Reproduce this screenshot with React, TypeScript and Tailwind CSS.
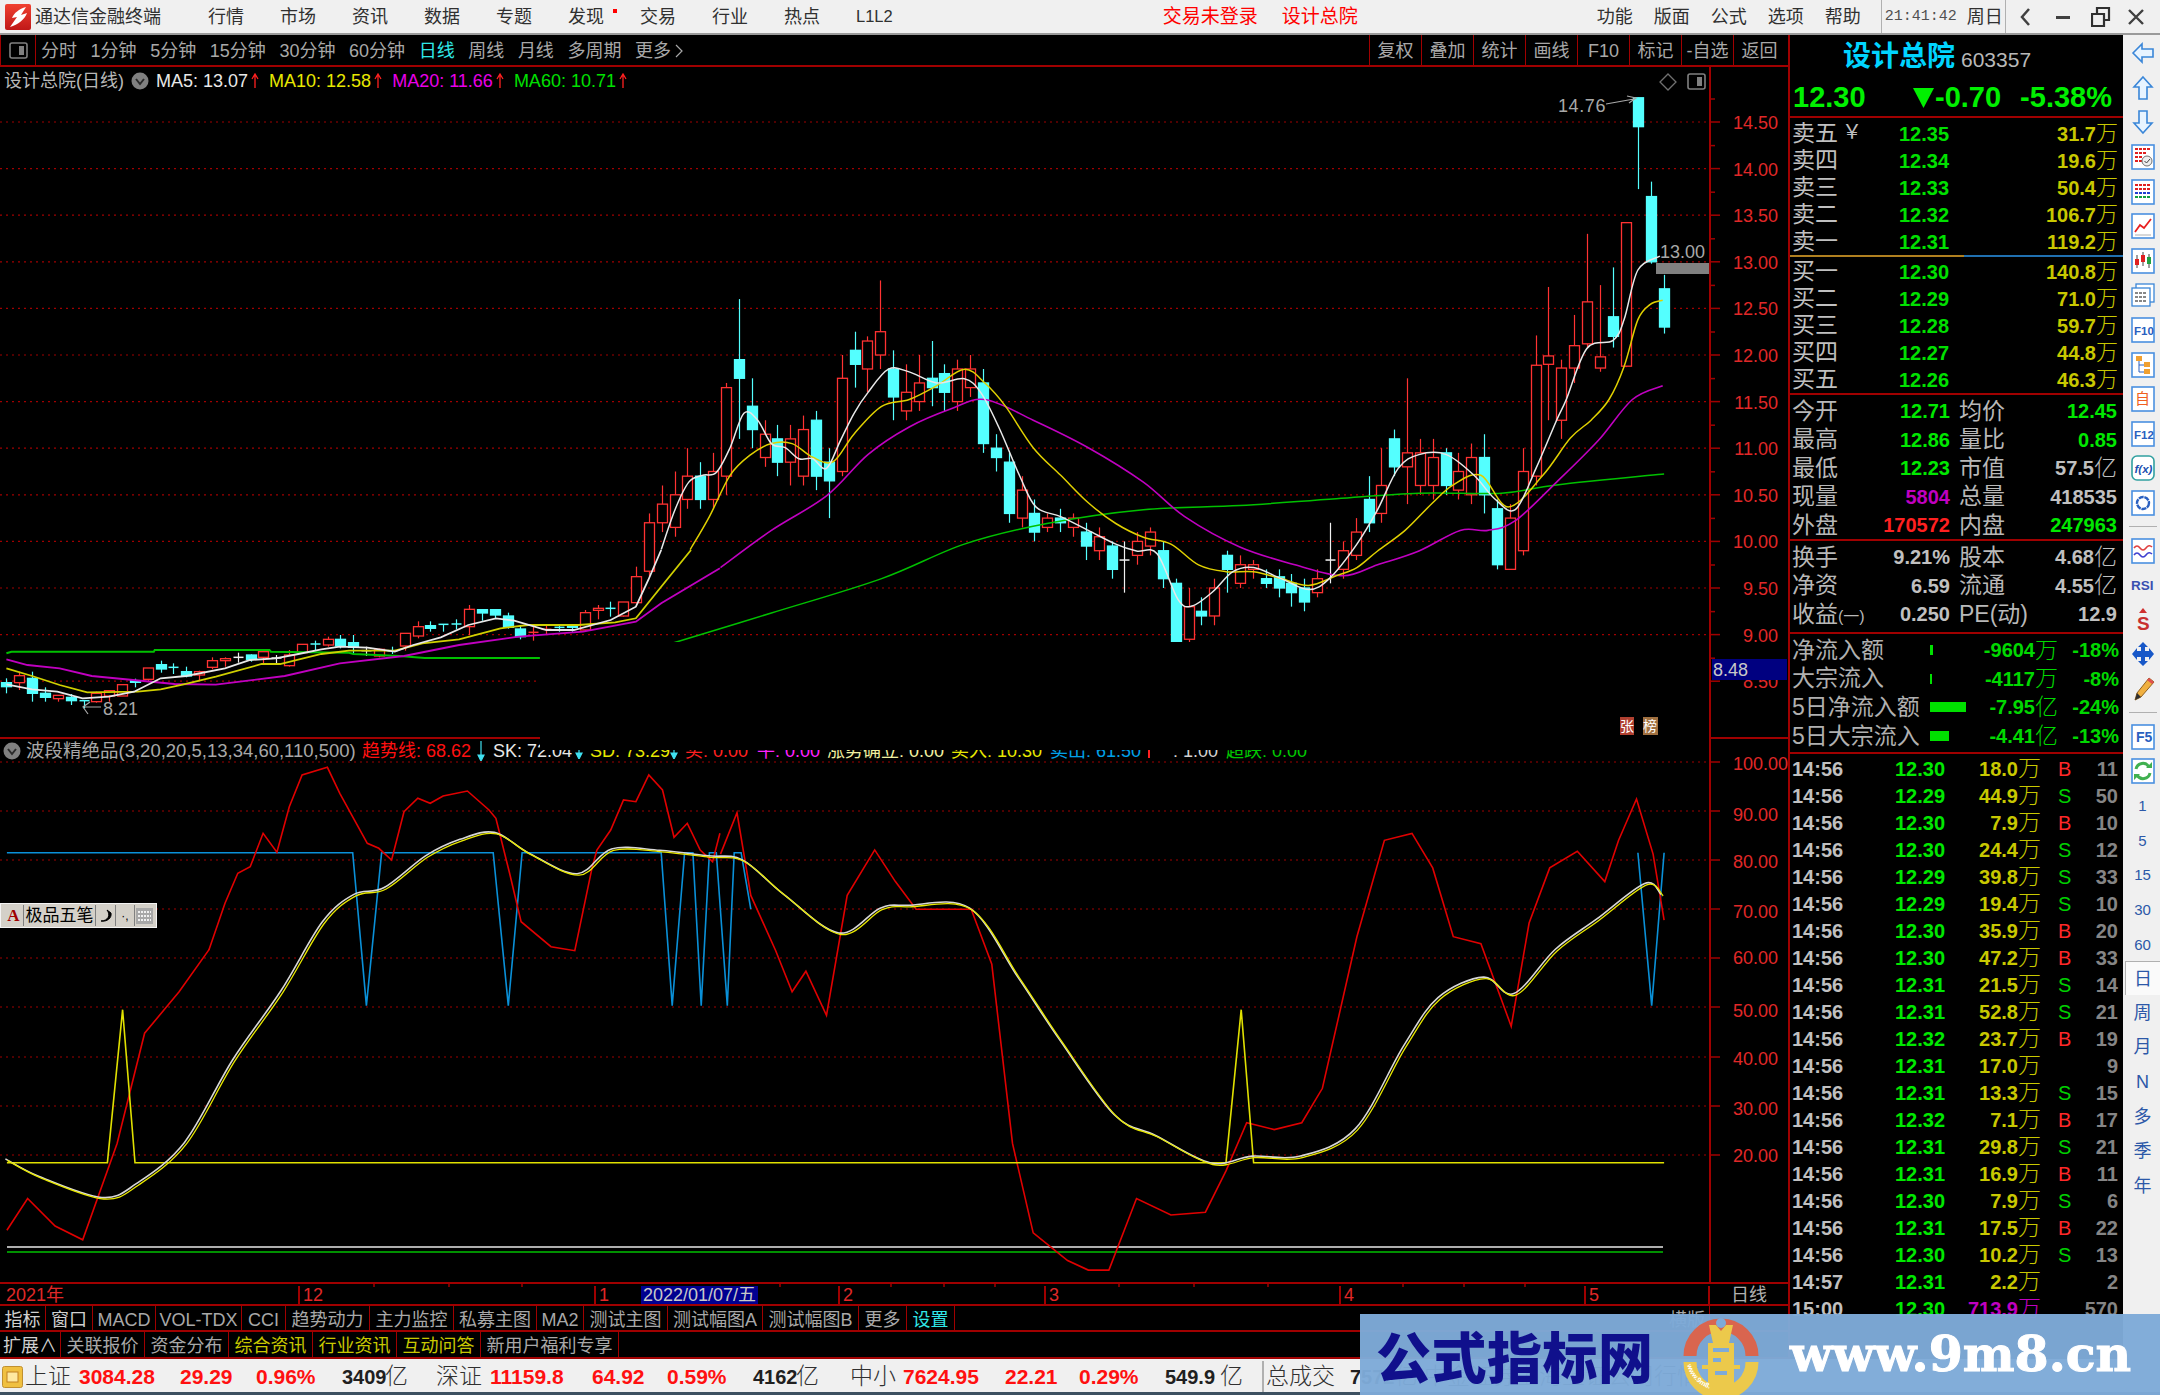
import React from "react";

type P = [number, number];
const SC = 2160 / 1568;
const sh = (a: P[]) => a.map(([x, y]) => `${(x * SC).toFixed(1)},${(y * SC).toFixed(1)}`).join(" ");
const z11 = (a: P[]) => a.map(([x, y]) => `${(x / 2.178).toFixed(1)},${(550 + y / 3).toFixed(1)}`).join(" ");
const z8 = (a: P[]) => a.map(([x, y]) => `${(x / 2.178).toFixed(1)},${(730 + y / 3).toFixed(1)}`).join(" ");
const smooth = (a: P[]) => {
  const p = a.map(([x, y]) => [x * SC, y * SC]);
  let d = `M${p[0][0].toFixed(1)} ${p[0][1].toFixed(1)}`;
  for (let i = 0; i < p.length - 1; i++) {
    const p0 = p[Math.max(0, i - 1)], p1 = p[i], p2 = p[i + 1], p3 = p[Math.min(p.length - 1, i + 2)];
    const c1x = p1[0] + (p2[0] - p0[0]) / 6, c1y = p1[1] + (p2[1] - p0[1]) / 6;
    const c2x = p2[0] - (p3[0] - p1[0]) / 6, c2y = p2[1] - (p3[1] - p1[1]) / 6;
    d += ` C${c1x.toFixed(1)} ${c1y.toFixed(1)} ${c2x.toFixed(1)} ${c2y.toFixed(1)} ${p2[0].toFixed(1)} ${p2[1].toFixed(1)}`;
  }
  return d;
};
const Y = (p: number) => 122 + (14.5 - p) * 93.2;
const CX = (i: number) => 6.4 + 12.85 * i;

// early candles: type, body top, body bottom, wick top, wick bottom (crop coordinates)
const early: [string, number, number, number, number][] = [
  ["c", 398, 410, 385, 430], ["r", 377, 398, 365, 420], ["c", 385, 430, 365, 455], ["c", 430, 442, 412, 455], ["r", 436, 446, 436, 455],
  ["c", 442, 452, 432, 465], ["c", 452, 456, 450, 475], ["r", 430, 455, 425, 458], ["r", 422, 438, 420, 455], ["r", 404, 438, 404, 438],
  ["c", 392, 397, 386, 412], ["r", 354, 388, 354, 395], ["c", 344, 357, 332, 368], ["c", 352, 354, 340, 372], ["c", 365, 378, 350, 382],
  ["r", 365, 375, 362, 390], ["r", 332, 352, 322, 358], ["r", 326, 332, 322, 350], ["w", 322, 322, 308, 338], ["c", 315, 328, 313, 335],
  ["r", 305, 322, 297, 340], ["w", 324, 324, 315, 340], ["r", 315, 347, 300, 350], ["r", 283, 308, 283, 312], ["c", 282, 284, 272, 303],
  ["r", 268, 285, 260, 290], ["c", 268, 288, 255, 295], ["c", 278, 292, 255, 315], ["w", 302, 302, 290, 318], ["r", 298, 318, 296, 322],
  ["c", 302, 306, 290, 312], ["r", 250, 288, 250, 302], ["r", 230, 258, 214, 265], ["c", 227, 235, 214, 245], ["c", 223, 225, 222, 245],
  ["c", 222, 224, 208, 238], ["r", 178, 230, 165, 255], ["c", 179, 189, 179, 212], ["c", 179, 195, 179, 205], ["c", 198, 232, 188, 236],
  ["c", 237, 260, 228, 268], ["r", 247, 247, 230, 272], ["r", 238, 238, 225, 255], ["c", 232, 235, 225, 245], ["c", 226, 232, 225, 245],
  ["r", 188, 240, 180, 245], ["r", 175, 181, 165, 208], ["c", 175, 178, 155, 200], ["r", 156, 198, 156, 200], ["r", 80, 158, 50, 160],
];
const later: [number, number, number, number][] = [
  [9.68,10.2,10.3,9.62],[10.2,10.4,10.6,10.1],[10.15,10.5,10.75,10.05],[10.45,10.7,11.0,10.35],[10.7,10.45,10.85,10.35],[10.45,10.75,10.95,10.35],
  [10.7,11.65,11.7,10.5],[11.95,11.75,12.6,11.1],[11.45,11.2,11.75,11.0],[10.9,11.15,11.3,10.8],[11.1,10.85,11.25,10.7],
  [10.85,11.1,11.25,10.6],[10.7,11.2,11.35,10.6],[11.3,10.7,11.4,10.55],[10.85,10.65,11.0,10.25],[10.75,11.75,12.0,10.7],
  [12.05,11.9,12.25,11.65],[11.85,12.15,12.2,11.6],[12.0,12.25,12.8,11.85],[11.85,11.55,12.05,11.3],[11.4,11.6,11.9,11.3],
  [11.5,11.7,12.0,11.4],[11.75,11.65,12.15,11.45],[11.8,11.6,11.9,11.4],[11.5,11.85,11.95,11.4],[11.65,11.85,12.0,11.55],
  [11.7,11.05,11.85,10.95],[11.0,10.9,11.15,10.75],[10.85,10.3,10.95,10.2],[10.25,10.55,10.7,10.15],[10.3,10.1,10.45,10.0],
  [10.15,10.25,10.3,10.1],[10.25,10.2,10.35,10.1],[10.15,10.25,10.3,10.05],[10.1,9.95,10.2,9.8],[9.9,10.05,10.15,9.8],
  [9.95,9.7,10.0,9.6],[9.8,9.8,10.0,9.45],[9.85,10.0,10.1,9.75],[9.95,10.1,10.15,9.85],[9.9,9.6,10.0,9.5],
  [9.55,8.9,9.6,8.85],[8.95,9.3,9.5,8.9],[9.25,9.2,9.4,9.1],[9.2,9.5,9.6,9.1],[9.85,9.7,9.9,9.45],
  [9.55,9.75,9.85,9.5],[9.7,9.75,9.8,9.6],[9.6,9.55,9.7,9.5],[9.62,9.5,9.7,9.4],[9.55,9.45,9.65,9.3],
  [9.5,9.35,9.6,9.25],[9.45,9.6,9.7,9.4],[9.8,9.8,10.2,9.55],[9.7,9.9,10.0,9.6],[9.85,10.1,10.25,9.8],
  [10.45,10.2,10.7,10.1],[10.3,10.6,11.0,10.2],[11.1,10.8,11.2,10.7],[10.8,10.95,11.75,10.4],[10.6,10.95,11.1,10.5],
  [10.6,10.9,11.1,10.45],[10.95,10.6,11.0,10.5],[10.55,10.75,10.95,10.45],[10.5,10.9,11.05,10.4],[10.9,10.5,11.15,10.3],
  [10.35,9.75,10.45,9.7],[9.7,10.25,10.4,9.7],[9.9,10.75,11.0,9.85],[10.7,11.89,12.21,10.6],[11.9,11.99,12.73,11.3],
  [11.3,11.86,11.95,11.1],[11.86,12.1,12.43,11.7],[12.12,12.57,13.3,12.08],[11.86,11.98,12.75,11.82],[12.41,12.2,12.94,12.08],
  [11.88,13.42,13.42,11.87],[14.76,14.45,14.76,13.78],[13.7,13.0,13.86,12.98],[12.71,12.3,12.86,12.23],
];
const candles = [
  ...early.map(([t, a, b, h, l]) => ({ t, top: 550 + a / 3, bot: 550 + b / 3, hi: 550 + h / 3, lo: 550 + l / 3 })),
  ...later.map(([o, c, h, l]) => ({
    t: c > o ? "r" : c < o ? "c" : "w",
    top: Y(Math.max(o, c)), bot: Y(Math.min(o, c)), hi: Y(h), lo: Y(l),
  })),
];
const colorOf: Record<string, string> = { r: "#ff3232", c: "#54ffff", w: "#f0f0f0" };

function Candle({ i }: { i: number }) {
  const k = candles[i];
  const x = Math.round(CX(i)) + 0.5;
  const col = colorOf[k.t];
  const doji = k.bot - k.top < 1.5;
  return (
    <g>
      <line x1={x} x2={x} y1={k.hi} y2={k.lo} stroke={col} strokeWidth={1.2} />
      {doji ? (
        <line x1={x - 5} x2={x + 5} y1={k.top} y2={k.top} stroke={col} strokeWidth={1.5} />
      ) : (
        <rect x={x - 5} y={k.top} width={10} height={k.bot - k.top} fill={k.t === "c" ? col : "#000"} stroke={col} strokeWidth={1.3} />
      )}
    </g>
  );
}

const white1: P[] = [[14,403],[70,418],[125,425],[180,445],[237,440],[292,425],[350,385],[405,378],[490,355],[545,330],[600,325],[650,312],[700,298],[740,290],[800,293],[860,305],[900,285],[960,262],[1020,225],[1080,205],[1120,212],[1190,240],[1250,240],[1330,210],[1385,170],[1412,90],[1440,0]];
const white2: P[] = [[480,399],[490,370],[500,350],[510,345],[520,343],[530,325],[540,300],[550,305],[560,322],[570,325],[580,333],[590,333],[600,340],[610,320],[620,300],[630,285],[645,268],[660,270],[680,278],[700,275],[712,285],[725,310],[740,345],[752,368],[770,375],[790,385],[810,395],[825,400],[840,402],[855,435],[865,440],[880,430],[895,415],[910,412],[930,420],[950,428],[965,420],[985,395],[1000,370],[1015,340],[1030,330],[1050,330],[1070,345],[1085,362],[1100,370],[1115,340],[1130,305],[1137,290],[1152,253],[1171,247],[1179,232],[1189,196],[1205,186]];
const yellow1: P[] = [[14,355],[70,378],[130,405],[190,427],[300,425],[350,418],[400,403],[470,380],[570,342],[610,342],[700,312],[760,302],[860,302],[920,280],[1000,268],[1090,235],[1150,225],[1260,225],[1340,217],[1385,205],[1440,110],[1505,0]];
const yellow2: P[] = [[501,399],[515,375],[530,345],[545,330],[560,322],[575,322],[590,332],[605,335],[620,315],[640,295],[660,290],[680,280],[700,268],[715,278],[730,295],[750,325],[770,345],[790,365],[810,380],[830,390],[850,395],[870,410],[890,415],[910,415],[930,420],[950,425],[970,418],[985,412],[1000,400],[1020,385],[1040,365],[1055,352],[1075,345],[1095,368],[1120,345],[1140,318],[1155,305],[1168,290],[1179,266],[1189,232],[1198,221],[1207,218]];
const mag1: P[] = [[14,328],[60,345],[130,355],[200,378],[290,390],[380,402],[470,404],[620,378],[740,340],[880,318],[1000,285],[1130,260],[1270,245],[1385,215],[1440,160],[1568,55]];
const mag2: P[] = [[523,412],[560,385],[600,360],[630,330],[660,310],[690,297],[715,290],[750,305],[790,325],[830,350],[860,375],[900,397],[940,410],[975,418],[1000,410],[1030,400],[1060,385],[1080,385],[1100,378],[1130,350],[1160,320],[1185,290],[1207,280]];
const green1: P[] = [[14,310],[25,305],[335,305],[337,300],[587,300],[590,305],[760,308],[770,312],[870,318],[925,324],[1176,324]];
const green2: P[] = [[488,467],[560,445],[640,420],[700,395],[760,380],[830,370],[900,367],[970,362],[1030,358],[1090,358],[1130,352],[1208,344]];

const red1: P[] = [[5,893],[20,870],[40,890],[60,900],[85,830],[105,750],[130,720],[152,689]];
const red2: P[] = [[455,660],[490,520],[518,430],[545,410],[573,310],[603,367],[630,230],[658,135],[713,112],[740,190],[800,340],[825,355],[853,390],[880,245],[910,205],[937,220],[965,198],[1018,183],[1065,240],[1080,265],[1110,430],[1135,575],[1200,650],[1252,662],[1290,410],[1300,360],[1330,300],[1358,210],[1385,215],[1413,135],[1443,180],[1468,322],[1497,280],[1525,360],[1552,395],[1568,310]];
const red3: P[] = [[523,620],[535,590],[545,650],[563,690],[575,720],[585,705],[600,737],[615,650],[635,617],[650,640],[665,660],[690,660],[705,660],[720,700],[735,830],[750,895],[775,915],[790,922],[805,922],[825,870],[850,882],[875,880],[890,850],[905,815],[925,820],[945,815],[960,790],[985,680],[1005,610],[1025,605],[1040,630],[1055,680],[1075,685],[1097,745],[1110,670],[1125,630],[1145,618],[1165,640],[1175,610],[1188,580],[1200,620],[1208,668]];
const sk: P[] = [[5,842],[30,855],[75,870],[100,860],[135,830],[170,770],[205,720],[235,670],[258,650],[280,645],[310,622],[335,610],[360,605],[385,620],[420,635],[445,617],[480,618],[515,622],[540,625],[570,650],[610,678],[640,660],[660,658],[705,660],[740,710],[770,755],[810,810],[840,825],[880,845],[910,840],[945,840],[985,820],[1020,760],[1045,725],[1078,710],[1100,722],[1130,690],[1160,668],[1195,642],[1207,650]];
const blue1: P[] = [[5,619],[256,619],[266,730],[277,619],[358,619],[369,730],[379,619],[480,619],[488,730],[497,619],[503,619],[509,730],[515,619],[520,619],[528,730],[533,619],[538,619],[545,660]];
const blue2: P[] = [[1189,619],[1199,730],[1208,619]];
const flat: P[] = [[5,844],[78,844],[89,733],[98,844],[890,844],[901,733],[910,844],[1208,844]];

const MAIN_LABELS = ["14.50","14.00","13.50","13.00","12.50","12.00","11.50","11.00","10.50","10.00","9.50","9.00","8.50"];
const SUB = [[762,763,"100.00"],[811,814,"90.00"],[860,861,"80.00"],[909,911,"70.00"],[958,957,"60.00"],[1007,1010,"50.00"],[1057,1058,"40.00"],[1106,1108,"30.00"],[1155,1155,"20.00"]] as [number,number,string][];

function MainSvg() {
  return (
    <svg className="absolute inset-0 block" width={1788} height={670} viewBox="0 67 1788 670">
      {MAIN_LABELS.map((l) => {
        const y = Y(parseFloat(l));
        return (
          <g key={l}>
            <line x1={0} x2={1710} y1={y} y2={y} stroke="#a00000" strokeWidth={1.2} strokeDasharray="2 4" />
            <line x1={1710} x2={1720} y1={y} y2={y} stroke="#a00000" strokeWidth={1.5} />
            <line x1={1710} x2={1715} y1={y - 23} y2={y - 23} stroke="#a00000" strokeWidth={1.5} />
            <text x={1778} y={y + 7} textAnchor="end" fontSize={18} fill="#e02828">{l}</text>
          </g>
        );
      })}
      {candles.map((_, i) => <Candle key={i} i={i} />)}
      <polyline points={z11(green1)} fill="none" stroke="#00c000" strokeWidth={2} />
      <path d={smooth(green2)} fill="none" stroke="#00c000" strokeWidth={1.5} />
      <polyline points={z11(mag1)} fill="none" stroke="#c000c0" strokeWidth={1.8} />
      <path d={smooth(mag2)} fill="none" stroke="#c000c0" strokeWidth={1.6} />
      <polyline points={z11(yellow1)} fill="none" stroke="#d0d000" strokeWidth={1.8} />
      <path d={smooth(yellow2)} fill="none" stroke="#e0d000" strokeWidth={1.5} />
      <polyline points={z11(white1)} fill="none" stroke="#e8e8e8" strokeWidth={1.8} />
      <path d={smooth(white2)} fill="none" stroke="#e8e8e8" strokeWidth={1.5} />
      <rect x={540} y={642} width={1168} height={95} fill="#000" />
      <rect x={1656} y={263} width={54} height={11} fill="#808080" />
      <text x={1660} y={258} fontSize={18} fill="#a8a8a8">13.00</text>
      <text x={1558} y={112} fontSize={18} letterSpacing={0.6} fill="#a8a8a8">14.76</text>
      <path d="M1606 104 L1634 99 M1627 96 L1636 98 L1629 103" fill="none" stroke="#a8a8a8" strokeWidth={1.2} />
      <path d="M101 707 L85 707 M90 702 L83 707 L88 714" fill="none" stroke="#a8a8a8" strokeWidth={1.2} />
      <text x={103} y={715} fontSize={18} fill="#a8a8a8">8.21</text>
      <path d="M1668 74 L1676 82 L1668 90 L1660 82 Z" fill="none" stroke="#707070" strokeWidth={1.3} />
      <rect x={1688} y={74} width={17} height={15} rx={2} fill="none" stroke="#808080" strokeWidth={1.6} />
      <rect x={1697} y={77} width={5} height={9} fill="#808080" />
      <line x1={1710} x2={1710} y1={67} y2={737} stroke="#a00000" strokeWidth={2} />
      <rect x={1712} y={659} width={75} height={21} fill="#000080" />
      <text x={1713} y={676} fontSize={18} fill="#c8c8c8">8.48</text>
      <rect x={1620} y={717} width={14} height={18} fill="#b04030" />
      <text x={1620} y={731} fontSize={14} fill="#fff">张</text>
      <rect x={1643} y={717} width={15} height={18} fill="#a07040" />
      <text x={1643} y={731} fontSize={14} fill="#fff">榜</text>
    </svg>
  );
}

function SubSvg() {
  return (
    <svg className="absolute inset-0 block" width={1788} height={545} viewBox="0 737 1788 545">
      {SUB.map(([y, ly, l]) => (
        <g key={l}>
          <line x1={0} x2={1710} y1={y} y2={y} stroke="#a00000" strokeWidth={1.2} strokeDasharray="2 4" />
          <line x1={1710} x2={1720} y1={y} y2={y} stroke="#a00000" strokeWidth={1.5} />
          <text x={1733} y={ly + 7} fontSize={18} fill="#e02828">{l}</text>
        </g>
      ))}
      <polyline points={sh(blue1)} fill="none" stroke="#0a90d8" strokeWidth={1.6} />
      <polyline points={sh(blue2)} fill="none" stroke="#0a90d8" strokeWidth={1.6} />
      <line x1={7} x2={1663} y1={1247} y2={1247} stroke="#e8e8e8" strokeWidth={1.5} />
      <line x1={7} x2={1663} y1={1252} y2={1252} stroke="#00c000" strokeWidth={1.5} />
      <polyline points={sh(red1)} fill="none" stroke="#e00000" strokeWidth={1.6} />
      <polyline points={z8(red2)} fill="none" stroke="#e00000" strokeWidth={1.6} />
      <polyline points={sh(red3)} fill="none" stroke="#e00000" strokeWidth={1.6} />
      <polyline points={sh(flat)} fill="none" stroke="#e0e000" strokeWidth={1.6} />
      <path d={smooth(sk)} transform="translate(-1.5,-1)" fill="none" stroke="#d8d8d8" strokeWidth={1.6} />
      <path d={smooth(sk)} transform="translate(0.5,0.5)" fill="none" stroke="#e8e800" strokeWidth={1.3} />
      <line x1={0} x2={540} y1={738} y2={738} stroke="#a00000" strokeWidth={2} />
      <line x1={1710} x2={1788} y1={738} y2={738} stroke="#a00000" strokeWidth={2} />
      <line x1={1710} x2={1710} y1={737} y2={1282} stroke="#a00000" strokeWidth={2} />
    </svg>
  );
}

function ArrowUpRed() {
  return (
    <svg width={8} height={16} viewBox="0 0 8 16" className="shrink-0">
      <path d="M4 15 V1 M1 6 L4 1 L7 6" fill="none" stroke="#ff2020" strokeWidth={1.3} />
    </svg>
  );
}
function ArrowDownCyan({ h = 16 }: { h?: number }) {
  return (
    <svg width={8} height={h} viewBox={`0 0 8 ${h}`} className="shrink-0">
      <path d={`M4 0 V${h - 3} M1 ${h - 6} L4 ${h} L7 ${h - 6} Z`} fill="#40e0f0" stroke="#40e0f0" strokeWidth={1.2} />
    </svg>
  );
}
function Chev() {
  return (
    <svg width={18} height={18} viewBox="0 0 18 18" className="shrink-0">
      <circle cx={9} cy={9} r={8.5} fill="#808080" />
      <path d="M5 7 L9 12 L13 7" fill="none" stroke="#2a2a2a" strokeWidth={2} />
    </svg>
  );
}

function TitleBar() {
  const menu = ["行情", "市场", "资讯", "数据", "专题", "发现", "交易", "行业", "热点"];
  return (
    <div className="flex h-[35px] shrink-0 items-center border-b-2 border-[#9a9a9a] bg-[#f0f0f0] text-[18px] leading-none text-[#303030]">
      <div className="flex w-[208px] shrink-0 items-center pl-[5px]">
        <svg width={26} height={26} viewBox="0 0 26 26" className="shrink-0">
          <defs>
            <linearGradient id="lg" x1="0" y1="0" x2="0" y2="1">
              <stop offset="0" stopColor="#f04030" />
              <stop offset="1" stopColor="#c01818" />
            </linearGradient>
          </defs>
          <rect width={26} height={26} rx={2} fill="url(#lg)" />
          <path d="M21 3 C14 5 9 9 7 14 L12 13 L5 23 C13 21 20 15 22 9 L16 11 Z" fill="#fff" />
        </svg>
        <span className="ml-[4px]">通达信金融终端</span>
      </div>
      <div className="flex gap-[36px]">
        {menu.map((m) => (
          <span key={m} className="relative block w-[36px]">
            {m}
            {m === "发现" && <i className="absolute left-[45px] top-[1px] block h-[4px] w-[4px] bg-[#ff0000]" />}
          </span>
        ))}
        <span className="text-[16.5px]">L1L2</span>
      </div>
      <span className="ml-[270px] text-[19px] text-[#ff0000]">交易未登录</span>
      <span className="ml-[24px] text-[19px] text-[#ff0000]">设计总院</span>
      <div className="ml-[239px] flex gap-[21px]">
        {["功能", "版面", "公式", "选项", "帮助"].map((m) => <span key={m}>{m}</span>)}
      </div>
      <div className="ml-[20px] flex h-full w-[125px] items-center border-x border-[#b0b0b0] pl-[3px]">
        <span className="[font-family:'Liberation_Mono',monospace] text-[15px] text-[#505050]">21:41:42</span>
        <span className="ml-[10px]">周日</span>
      </div>
      <div className="flex items-center">
        <svg width={14} height={20} viewBox="0 0 14 20" className="ml-[13px]"><path d="M10 2 L3 10 L10 18" fill="none" stroke="#404040" strokeWidth={2.5} /></svg>
        <svg width={16} height={20} viewBox="0 0 16 20" className="ml-[22px]"><rect x={1} y={9} width={14} height={3} fill="#404040" /></svg>
        <svg width={20} height={20} viewBox="0 0 20 20" className="ml-[20px]"><path d="M1 7 H13 V19 H1 Z M6 6 V1 H18 V13 H14" fill="none" stroke="#303030" strokeWidth={2.2} /></svg>
        <svg width={18} height={18} viewBox="0 0 18 18" className="ml-[16px]"><path d="M2 2 L16 16 M16 2 L2 16" stroke="#404040" strokeWidth={2.4} /></svg>
      </div>
    </div>
  );
}

function Toolbar() {
  const tabs = ["分时", "1分钟", "5分钟", "15分钟", "30分钟", "60分钟", "日线", "周线", "月线", "多周期"];
  const right = ["复权", "叠加", "统计", "画线", "F10", "标记", "-自选", "返回"];
  return (
    <div className="flex h-[32px] shrink-0 items-center border-b-2 border-[#a00000] text-[18px] leading-none text-[#a8a8a8]">
      <div className="flex h-full w-[36px] shrink-0 items-center justify-center border-x border-[#a00000]">
        <svg width={19} height={17} viewBox="0 0 19 17"><rect x={1} y={1} width={17} height={15} rx={2} fill="none" stroke="#808080" strokeWidth={1.6} /><rect x={10} y={4} width={5} height={9} fill="#808080" /></svg>
      </div>
      <div className="ml-[5px] flex items-center gap-[13.6px] pt-[2px]">
        {tabs.map((t) => (
          <span key={t} className={t === "日线" ? "text-[#30e8e8]" : ""}>{t}</span>
        ))}
        <span className="flex items-center">更多
          <svg width={10} height={16} viewBox="0 0 10 16" className="ml-[3px]"><path d="M2 2 L8 8 L2 14" fill="none" stroke="#a8a8a8" strokeWidth={1.2} /></svg>
        </span>
      </div>
      <div className="ml-auto mr-[3px] flex h-full">
        {right.map((t) => (
          <span key={t} className="flex h-full w-[52px] items-center justify-center border-l border-[#a00000] pt-[2px] whitespace-nowrap">{t}</span>
        ))}
      </div>
    </div>
  );
}

function MainPanel() {
  return (
    <div className="relative h-[670px] shrink-0 overflow-hidden">
      <MainSvg />
      <div className="relative flex h-[28px] items-center pl-[4px] text-[18px] leading-none text-[#b8b8b8]">
        <span>设计总院(日线)</span>
        <span className="ml-[7px]"><Chev /></span>
        <span className="ml-[7px] text-[#e8e8e8]">MA5: 13.07</span>
        <span className="ml-[3px]"><ArrowUpRed /></span>
        <span className="ml-[10px] text-[#e8e800]">MA10: 12.58</span>
        <span className="ml-[3px]"><ArrowUpRed /></span>
        <span className="ml-[10px] text-[#e800e8]">MA20: 11.66</span>
        <span className="ml-[3px]"><ArrowUpRed /></span>
        <span className="ml-[10px] text-[#00e000]">MA60: 10.71</span>
        <span className="ml-[3px]"><ArrowUpRed /></span>
      </div>
    </div>
  );
}

function SubPanel() {
  return (
    <div className="relative h-[545px] shrink-0 overflow-hidden">
      <SubSvg />
      <div className="relative flex h-[26px] items-center pl-[3px] pt-[2px] text-[18px] leading-none whitespace-nowrap text-[#b8b8b8]">
        <Chev />
        <span className="ml-[5px] w-[336px] text-[18.5px] text-[#a8a8a8]">波段精绝品(3,20,20,5,13,34,60,110,500)</span>
        <span className="w-[115px] text-[#ff1010]">趋势线: 68.62</span>
        <ArrowDownCyan h={20} />
        <span className="ml-[8px] w-[82px] text-[#e8e8e8]">SK: 72.04</span>
        <ArrowDownCyan />
        <span className="ml-[7px] w-[80px] text-[#e8e800]">SD: 73.29</span>
        <ArrowDownCyan />
        <span className="ml-[7px] w-[72px] text-[#ff2020]">买: 0.00</span>
        <span className="w-[70px] text-[#ff20ff]">平: 0.00</span>
        <span className="w-[124px] text-[#f0f0a0]">涨势确立: 0.00</span>
        <span className="w-[99px] text-[#e8e800]">买入: 10.30</span>
        <span className="w-[98px] text-[#00a0e8]">卖出: 61.50</span>
        <i className="mr-[23px] block h-[14px] w-[2px] bg-[#ff2020]" />
        <span className="w-[53px] text-[#d0d0d0]">: 1.00</span>
        <span className="text-[#00c800]">超跌: 0.00</span>
      </div>
      <div className="absolute left-[540px] top-0 h-[13px] w-[1168px] bg-black" />
      <div className="absolute left-0 top-[166px] flex h-[25px] w-[157px] items-center border border-[#f4f4f4] bg-[#d4d0c8] pl-[3px] text-[17px] leading-none whitespace-nowrap text-black">
        <span className="flex h-[21px] w-[20px] items-center justify-center border-r border-[#808080] font-bold text-[#a00000] [font-family:'Liberation_Serif',serif]">A</span>
        <span className="flex h-[21px] w-[72px] items-center justify-center border-r border-[#808080]">极品五笔</span>
        <span className="flex h-[21px] w-[20px] items-center justify-center border-r border-[#808080]">
          <svg width={12} height={14} viewBox="0 0 12 14"><path d="M7 1 C11 6 8 12 1 12 C7 13 12 9 11 4 Z" fill="#000" stroke="#000" /></svg>
        </span>
        <span className="flex h-[21px] w-[19px] items-center justify-center border-r border-[#808080] text-[12px]">·,</span>
        <svg width={17} height={16} viewBox="0 0 17 16" className="ml-px"><rect width={17} height={16} fill="#a8a8a8" /><path d="M2 4 H15 M2 8 H15 M2 12 H15" stroke="#f0f0f0" strokeWidth={2} strokeDasharray="2 1" /></svg>
      </div>
    </div>
  );
}

function DateRow() {
  const ticks = [374, 449, 522, 780, 891, 944, 995, 1119, 1194, 1268, 1403, 1464, 1525];
  return (
    <div className="relative flex h-[24px] shrink-0 border-y-2 border-[#a00000] pt-[2px] text-[18px] leading-none text-[#e02828]">
      <span className="flex w-[300px] items-center border-r-2 border-[#a00000] pl-[6px]">2021年</span>
      <span className="flex w-[296px] items-center border-r-2 border-[#a00000] pl-[3px]">12</span>
      <span className="flex w-[45px] items-center pl-[3px]">1</span>
      <span className="flex w-[117px] items-center justify-center bg-[#000090] text-[#c8c8c8]">2022/01/07/五</span>
      <span className="w-[82px] border-r-2 border-[#a00000]" />
      <span className="flex w-[206px] items-center border-r-2 border-[#a00000] pl-[3px]">2</span>
      <span className="flex w-[295px] items-center border-r-2 border-[#a00000] pl-[3px]">3</span>
      <span className="flex w-[245px] items-center border-r-2 border-[#a00000] pl-[3px]">4</span>
      <span className="flex w-[124px] items-center border-r-2 border-[#a00000] pl-[3px]">5</span>
      <span className="flex w-[78px] items-center justify-center text-[#b0b0b0]">日线</span>
      <svg className="absolute left-0 top-0" width={1710} height={4}>
        {ticks.map((x) => <line key={x} x1={x} x2={x} y1={0} y2={3} stroke="#a00000" strokeWidth={1.5} />)}
      </svg>
    </div>
  );
}

function Cell({ w, c = "text-[#a8a8a8]", children }: { w: string; c?: string; children: React.ReactNode }) {
  return <span className={`flex h-full items-center justify-center border-r border-[#a00000] pt-[3px] whitespace-nowrap ${w} ${c}`}>{children}</span>;
}

function TabRows() {
  return (
    <>
      <div className="flex h-[26px] shrink-0 items-center border-b-2 border-[#a00000] text-[18px] leading-none">
        <Cell w="w-[46px]" c="text-[#d0d0d0]">指标</Cell>
        <Cell w="w-[47px]" c="text-[#d0d0d0]">窗口</Cell>
        <Cell w="w-[63px]">MACD</Cell>
        <Cell w="w-[86px]">VOL-TDX</Cell>
        <Cell w="w-[44px]">CCI</Cell>
        <Cell w="w-[84px]">趋势动力</Cell>
        <Cell w="w-[84px]">主力监控</Cell>
        <Cell w="w-[83px]">私募主图</Cell>
        <Cell w="w-[47px]">MA2</Cell>
        <Cell w="w-[84px]">测试主图</Cell>
        <Cell w="w-[95px]">测试幅图A</Cell>
        <Cell w="w-[96px]">测试幅图B</Cell>
        <Cell w="w-[48px]">更多</Cell>
        <Cell w="w-[48px]" c="text-[#30e8e8]">设置</Cell>
        <span className="w-[710px]" />
        <Cell w="w-[45px]">横版</Cell>
      </div>
      <div className="flex h-[27px] shrink-0 items-center border-b-2 border-[#a00000] text-[18px] leading-none">
        <Cell w="w-[61px]" c="text-[#d0d0d0]">扩展∧</Cell>
        <Cell w="w-[84px]">关联报价</Cell>
        <Cell w="w-[84px]">资金分布</Cell>
        <Cell w="w-[84px]" c="text-[#c8c800]">综合资讯</Cell>
        <Cell w="w-[84px]" c="text-[#c8c800]">行业资讯</Cell>
        <Cell w="w-[84px]" c="text-[#c8c800]">互动问答</Cell>
        <Cell w="w-[138px]">新用户福利专享</Cell>
      </div>
    </>
  );
}

const sells: [string, string, string, string?][] = [["卖五", "12.35", "31.7", "￥"], ["卖四", "12.34", "19.6"], ["卖三", "12.33", "50.4"], ["卖二", "12.32", "106.7"], ["卖一", "12.31", "119.2"]];
const buys: [string, string, string][] = [["买一", "12.30", "140.8"], ["买二", "12.29", "71.0"], ["买三", "12.28", "59.7"], ["买四", "12.27", "44.8"], ["买五", "12.26", "46.3"]];

function Quote({ row }: { row: [string, string, string, string?] }) {
  return (
    <div className="flex h-[27px] items-center pr-[5px] leading-none">
      <span className="relative w-[107px] text-[23px] text-[#c0c0c0]">
        {row[0]}
        {row[3] && <span className="absolute left-[50px] top-0 text-[20px]">{row[3]}</span>}
      </span>
      <span className="w-[60px] text-[20px] font-bold text-[#00e000]">{row[1]}</span>
      <span className="flex flex-1 items-center justify-end text-[20px] font-bold text-[#c8c800]">{row[2]}<span className="text-[22px] font-light">万</span></span>
    </div>
  );
}

function Info({ l, v, c = "text-[#c0c0c0]" }: { l: React.ReactNode; v: React.ReactNode; c?: string }) {
  return (
    <div className="flex h-[28.5px] items-center justify-between leading-none">
      <span className="whitespace-nowrap text-[23px] text-[#b8b8b8]">{l}</span>
      <span className={`flex items-center text-[20px] font-bold ${c}`}>{v}</span>
    </div>
  );
}
const Yi = ({ n }: { n: string }) => <>{n}<span className="text-[23px] font-light">亿</span></>;

function Flow({ l, bar, v, u, p }: { l: React.ReactNode; bar: string; v: string; u: string; p: string }) {
  return (
    <div className="flex h-[28.6px] items-center pr-[4px] leading-none">
      <span className="w-[138px] whitespace-nowrap text-[23px] text-[#b0b0b0]">{l}</span>
      <span className="flex w-[48px] items-center"><i className={`block ${bar} bg-[#00e000]`} /></span>
      <span className="flex w-[80px] items-center justify-end text-[20px] font-bold text-[#00d800]">{v}<span className="text-[23px] font-light">{u}</span></span>
      <span className="flex-1 text-right text-[20px] font-bold text-[#00d800]">{p}</span>
    </div>
  );
}

const ticksData: [string, string, string, string, string][] = [
  ["14:56","12.30","18.0","B","11"],["14:56","12.29","44.9","S","50"],["14:56","12.30","7.9","B","10"],["14:56","12.30","24.4","S","12"],
  ["14:56","12.29","39.8","S","33"],["14:56","12.29","19.4","S","10"],["14:56","12.30","35.9","B","20"],["14:56","12.30","47.2","B","33"],
  ["14:56","12.31","21.5","S","14"],["14:56","12.31","52.8","S","21"],["14:56","12.32","23.7","B","19"],["14:56","12.31","17.0","","9"],
  ["14:56","12.31","13.3","S","15"],["14:56","12.32","7.1","B","17"],["14:56","12.31","29.8","S","21"],["14:56","12.31","16.9","B","11"],
  ["14:56","12.30","7.9","S","6"],["14:56","12.31","17.5","B","22"],["14:56","12.30","10.2","S","13"],["14:57","12.31","2.2","","2"],
  ["15:00","12.30","713.9","","570"],
];

function RightPanel() {
  return (
    <div className="h-[1324px] w-[335px] shrink-0 overflow-hidden border-l-2 border-[#a00000]">
      <div className="h-[83px] border-b-2 border-[#a00000]">
        <div className="flex h-[43px] items-center pl-[53px] leading-none">
          <span className="text-[28px] font-bold text-[#00d4ff]">设计总院</span>
          <span className="ml-[6px] mt-[6px] text-[21px] text-[#b8b8b8]">603357</span>
        </div>
        <div className="flex h-[38px] items-center pl-[3px] text-[29px] font-bold leading-none text-[#00f000]">
          <span className="w-[120px]">12.30</span>
          <svg width={21} height={21} viewBox="0 0 21 21" className="shrink-0"><path d="M0 1 H21 L10.5 21 Z" fill="#00f000" /></svg>
          <span className="ml-[1px]">-0.70</span>
          <span className="ml-[19px]">-5.38%</span>
        </div>
      </div>
      <div className="flex h-[137px] flex-col pl-[2px] pt-[2px]">
        {sells.map((r) => <Quote key={r[0]} row={r} />)}
      </div>
      <div className="flex h-[2px]">
        <i className="block w-[174px] bg-[#b08020]" />
        <i className="block flex-1 bg-[#2070b0]" />
      </div>
      <div className="flex h-[138px] flex-col border-b-2 border-[#a00000] pl-[2px] pt-[1px]">
        {buys.map((r) => <Quote key={r[0]} row={r} />)}
      </div>
      <div className="grid h-[146px] grid-cols-[158px_158px] content-start gap-x-[9px] border-b-2 border-[#a00000] pl-[2px] pt-[2px]">
        <Info l="今开" v="12.71" c="text-[#00e800]" /><Info l="均价" v="12.45" c="text-[#00e800]" />
        <Info l="最高" v="12.86" c="text-[#00e800]" /><Info l="量比" v="0.85" c="text-[#00e800]" />
        <Info l="最低" v="12.23" c="text-[#00e800]" /><Info l="市值" v={<Yi n="57.5" />} />
        <Info l="现量" v="5804" c="text-[#c000c0]" /><Info l="总量" v="418535" />
        <Info l="外盘" v="170572" c="text-[#ff2020]" /><Info l="内盘" v="247963" c="text-[#00e800]" />
      </div>
      <div className="grid h-[93px] grid-cols-[158px_158px] content-start gap-x-[9px] border-b-2 border-[#a00000] pl-[2px] pt-[2px]">
        <Info l="换手" v="9.21%" /><Info l="股本" v={<Yi n="4.68" />} />
        <Info l="净资" v="6.59" /><Info l="流通" v={<Yi n="4.55" />} />
        <Info l={<>收益<span className="text-[16px]">(一)</span></>} v="0.250" /><Info l="PE(动)" v="12.9" />
      </div>
      <div className="h-[120px] border-b-2 border-[#a00000] pl-[2px] pt-[2px]">
        <Flow l="净流入额" bar="h-[10px] w-[3px]" v="-9604" u="万" p="-18%" />
        <Flow l="大宗流入" bar="h-[10px] w-[2px]" v="-4117" u="万" p="-8%" />
        <Flow l="5日净流入额" bar="h-[10px] w-[36px]" v="-7.95" u="亿" p="-24%" />
        <Flow l="5日大宗流入" bar="h-[10px] w-[19px]" v="-4.41" u="亿" p="-13%" />
      </div>
      <div className="pl-[2px] pt-[1px]">
        {ticksData.map((t, i) => (
          <div key={i} className="flex h-[27px] items-center pr-[5px] text-[20px] font-bold leading-none">
            <span className="w-[103px] text-[#c0c0c0]">{t[0]}</span>
            <span className="w-[52px] text-[#00e800]">{t[1]}</span>
            <span className={`flex w-[94px] items-center justify-end ${t[2] === "713.9" ? "text-[#c000c0]" : "text-[#c8c800]"}`}>
              {t[2]}<span className="text-[23px] font-light">万</span>
            </span>
            <span className={`ml-[17px] w-[14px] font-normal ${t[3] === "B" ? "text-[#ff2828]" : "text-[#00d000]"}`}>{t[3]}</span>
            <span className="flex-1 text-right text-[#858585]">{t[4]}</span>
          </div>
        ))}
      </div>
    </div>
  );
}

const Bx = ({ children }: { children: React.ReactNode }) => (
  <svg width={24} height={26} viewBox="0 0 24 26">{children}</svg>
);
const Frame = () => <rect x={1} y={1} width={22} height={24} fill="#fff" stroke="#4a90e0" strokeWidth={1.6} />;

function SideIcons() {
  const B = "#3a86d8";
  const rows: React.ReactNode[] = [
    <Bx><path d="M2 13 L11 4 V9 H22 V17 H11 V22 Z" fill="#e8f4ff" stroke={B} strokeWidth={1.6} /></Bx>,
    <Bx><path d="M12 2 L21 12 H16 V24 H8 V12 H3 Z" fill="#e8f4ff" stroke={B} strokeWidth={1.6} /></Bx>,
    <Bx><path d="M12 24 L21 14 H16 V2 H8 V14 H3 Z" fill="#e8f4ff" stroke={B} strokeWidth={1.6} /></Bx>,
    <Bx><Frame /><path d="M4 5 H20 M4 9 H15 M4 13 H12 M4 17 H12" stroke="#e02020" strokeWidth={2} strokeDasharray="3 1" /><circle cx={16} cy={17} r={5} fill="#eee" stroke="#707070" /><path d="M13.5 17 L15.5 19 L19 15" fill="none" stroke="#404040" /></Bx>,
    <Bx><Frame /><path d="M4 6 H20 M4 10 H20" stroke="#e02020" strokeWidth={2} strokeDasharray="3 1" /><path d="M4 14 H20" stroke="#2040d0" strokeWidth={2} strokeDasharray="3 1" /><path d="M4 18 H20" stroke="#10a040" strokeWidth={2} strokeDasharray="3 1" /></Bx>,
    <Bx><Frame /><path d="M4 19 L9 12 L13 15 L20 6" fill="none" stroke="#e82020" strokeWidth={1.8} /><path d="M4 22 H20" stroke="#b0b0b0" /></Bx>,
    <Bx><Frame /><path d="M6 7 V20 M12 4 V18 M18 6 V20" stroke="#404040" /><rect x={4} y={11} width={4} height={6} fill="#e02020" /><rect x={10} y={7} width={4} height={7} fill="#e02020" /><rect x={16} y={9} width={4} height={7} fill="#20a040" /></Bx>,
    <Bx><rect x={5} y={2} width={18} height={18} fill="#fff" stroke={B} strokeWidth={1.3} /><rect x={1} y={6} width={18} height={18} fill="#fff" stroke={B} strokeWidth={1.3} /><path d="M4 11 H16 M4 15 H16 M4 19 H16" stroke="#606060" strokeWidth={1.5} strokeDasharray="3 1" /></Bx>,
    <Bx><Frame /><text x={3} y={17.5} fontSize={11.5} fontWeight={700} fill="#2a60c0">F10</text></Bx>,
    <Bx><Frame /><rect x={5} y={4} width={6} height={5} fill="#f0a030" /><rect x={13} y={10} width={6} height={5} fill="#f0a030" /><rect x={13} y={17} width={6} height={5} fill="#f0a030" /><path d="M8 9 V20 H13 M8 13 H13" fill="none" stroke="#2a60c0" /></Bx>,
    <Bx><Frame /><text x={4} y={18} fontSize={15} fill="#f06020">自</text></Bx>,
    <Bx><Frame /><text x={3} y={17.5} fontSize={11.5} fontWeight={700} fill="#2a60c0">F12</text></Bx>,
    <Bx><rect x={1} y={1} width={22} height={24} rx={5} fill="#fff" stroke="#30a0a0" strokeWidth={1.6} /><text x={3.5} y={17.5} fontSize={11.5} fontStyle="italic" fontWeight={700} fill="#2050b0">f(x)</text></Bx>,
    <Bx><Frame /><circle cx={12} cy={13} r={6} fill="none" stroke="#2a60c0" strokeWidth={2.4} strokeDasharray="5 0.8" /></Bx>,
  ];
  const rows2: React.ReactNode[] = [
    <Bx><Frame /><path d="M3 10 Q6 6 9 10 T15 10 T21 9" fill="none" stroke="#e04040" strokeWidth={1.6} /><path d="M3 17 Q6 13 9 17 T15 17 T21 16" fill="none" stroke="#4040d0" strokeWidth={1.6} /></Bx>,
    <Bx><text x={0} y={18} fontSize={13.5} fontWeight={700} fill="#3a50b0">RSI</text></Bx>,
    <Bx><path d="M12 1 L16 6 H8 Z" fill="#d03030" /><text x={6} y={23} fontSize={19} fontWeight={700} fill="#c83030">S</text></Bx>,
    <Bx><path d="M12 1 L17 6 H14 V10 H18 V7 L23 13 L18 19 V16 H14 V20 H17 L12 25 L7 20 H10 V16 H6 V19 L1 13 L6 7 V10 H10 V6 H7 Z" fill="#1858c8" /></Bx>,
    <Bx><path d="M4 24 L6 17 L18 2 L23 6 L10 21 Z" fill="#f0b040" stroke="#906020" /><path d="M4 24 L6 17 L10 21 Z" fill="#303030" /><path d="M18 2 L23 6 L21 8 L16 4 Z" fill="#e05050" /></Bx>,
  ];
  const rows3: React.ReactNode[] = [
    <Bx><Frame /><text x={5} y={18} fontSize={14} fontWeight={700} fill="#2a60c0">F5</text></Bx>,
    <Bx><Frame /><path d="M5 11 A7 7 0 0 1 18 9 M19 15 A7 7 0 0 1 6 17" fill="none" stroke="#40b050" strokeWidth={3} /><path d="M15 10 H21 V4 Z M9 16 H3 V22 Z" fill="#40b050" /></Bx>,
  ];
  const Sep = () => <div className="flex h-[13px] items-center justify-center"><i className="block h-px w-[28px] bg-[#b0b0b0]" /></div>;
  const It = ({ children }: { children: React.ReactNode }) => <div className="flex h-[34.6px] items-center justify-center">{children}</div>;
  return (
    <div className="flex w-[37px] shrink-0 flex-col bg-[#f0f0f0] pl-[2px] pt-[1px] text-[18px] leading-none text-[#2c58a8]">
      {rows.map((r, i) => <It key={i}>{r}</It>)}
      <Sep />
      {rows2.map((r, i) => <It key={i}>{r}</It>)}
      <Sep />
      {rows3.map((r, i) => <It key={i}>{r}</It>)}
      {["1", "5", "15", "30", "60"].map((t) => <It key={t}><span className="text-[15px]">{t}</span></It>)}
      <div className="flex h-[34px] shrink-0 items-center justify-center border-l border-t border-[#b0b0b0] bg-[#fafafa]">日</div>
      {["周", "月", "N", "多", "季", "年"].map((t) => <It key={t}><span>{t}</span></It>)}
    </div>
  );
}

function StatusBar() {
  const R = "font-bold text-[21px] text-[#ff1010]";
  const K = "font-bold text-[20px] text-[#202020]";
  const L = "text-[23px] font-light text-[#303030]";
  return (
    <div className="flex h-[36px] shrink-0 items-center border-b-[3px] border-[#3c5060] bg-[#f0f0f0] pt-[2px] leading-none whitespace-nowrap">
      <svg width={21} height={22} viewBox="0 0 21 22" className="ml-[2px] shrink-0"><rect x={0.5} y={0.5} width={20} height={21} rx={2} fill="#f0c040" stroke="#c09030" /><rect x={5} y={6} width={11} height={10} fill="#ffe9a0" stroke="#c08020" /></svg>
      <span className={`ml-[2px] w-[54px] ${L}`}>上证</span>
      <span className={`w-[101px] ${R}`}>3084.28</span>
      <span className={`w-[76px] ${R}`}>29.29</span>
      <span className={`w-[86px] ${R}`}>0.96%</span>
      <span className={`w-[43px] ${K}`}>3409</span>
      <span className={`w-[51px] ${L}`}>亿</span>
      <span className={`w-[54px] ${L}`}>深证</span>
      <span className={`w-[102px] ${R}`}>11159.8</span>
      <span className={`w-[75px] ${R}`}>64.92</span>
      <span className={`w-[86px] ${R}`}>0.59%</span>
      <span className={`w-[43px] ${K}`}>4162</span>
      <span className={`w-[54px] ${L}`}>亿</span>
      <span className={`w-[53px] ${L}`}>中小</span>
      <span className={`w-[102px] ${R}`}>7624.95</span>
      <span className={`w-[74px] ${R}`}>22.21</span>
      <span className={`w-[86px] ${R}`}>0.29%</span>
      <span className={`w-[55px] ${K}`}>549.9</span>
      <span className={`w-[42px] ${L}`}>亿</span>
      <span className="h-full w-[4px] border-l-2 border-[#b0b0b0]" />
      <span className={`w-[84px] ${L}`}>总成交</span>
      <span className={K}>7572</span>
      <span className={L}>亿 中金证券上海上证公司行情</span>
    </div>
  );
}

function Watermark() {
  return (
    <div className="absolute bottom-0 right-0 flex h-[81px] w-[800px] items-center bg-[#7eaad8]/[0.97]">
      <span className="ml-[16px] w-[290px] shrink-0 whitespace-nowrap [font-family:'Noto_Sans_CJK_SC',sans-serif] text-[55px] font-black leading-none tracking-[0.5px] text-[#10108c]">公式指标网</span>
      <svg width={76} height={78} viewBox="0 0 76 78" className="ml-[17px] mt-[2px] shrink-0">
        <path d="M7 39 A31 31 0 0 1 69 39" fill="none" stroke="#d9654f" strokeWidth={13} />
        <path d="M7 45 A31 31 0 0 0 69 45" fill="none" stroke="#ecc94b" strokeWidth={13} />
        <circle cx={38} cy={6} r={5} fill="#7eaad8" />
        <path d="M26 8 H33 L38 14 L43 8 H50 L46 26 H30 Z" fill="#ecc94b" />
        <rect x={25} y={26} width={26} height={44} fill="#ecc94b" />
        <rect x={30} y={31} width={16} height={4} fill="#7eaad8" />
        <rect x={30} y={41} width={8} height={4} fill="#7eaad8" />
        <rect x={19} y={48} width={38} height={4} fill="#ecc94b" />
        <rect x={32} y={54} width={12} height={4} fill="#7eaad8" />
        <path d="M30 70 L26 78 H34 L38 72 L42 78 H50 L46 70 Z" fill="#ecc94b" />
        <path id="wmarc" d="M4 48 A34 34 0 0 0 28 72" fill="none" />
        <text fontSize={7} fontWeight={700} fill="#fff"><textPath href="#wmarc">www.9m8.cn</textPath></text>
      </svg>
      <span className="ml-[31px] whitespace-nowrap [font-family:'DejaVu_Serif',serif] text-[49px] font-bold leading-none text-white [-webkit-text-stroke:1px_white]">www.9m8.cn</span>
    </div>
  );
}

export default function App() {
  return (
    <div className="relative flex h-[1395px] w-[2160px] flex-col overflow-hidden bg-black [font-family:'Liberation_Sans','Noto_Sans_CJK_SC',sans-serif]">
      <TitleBar />
      <div className="flex h-[1324px] shrink-0">
        <div className="flex w-[1788px] shrink-0 flex-col">
          <Toolbar />
          <MainPanel />
          <SubPanel />
          <DateRow />
          <TabRows />
        </div>
        <RightPanel />
        <SideIcons />
      </div>
      <StatusBar />
      <Watermark />
    </div>
  );
}
